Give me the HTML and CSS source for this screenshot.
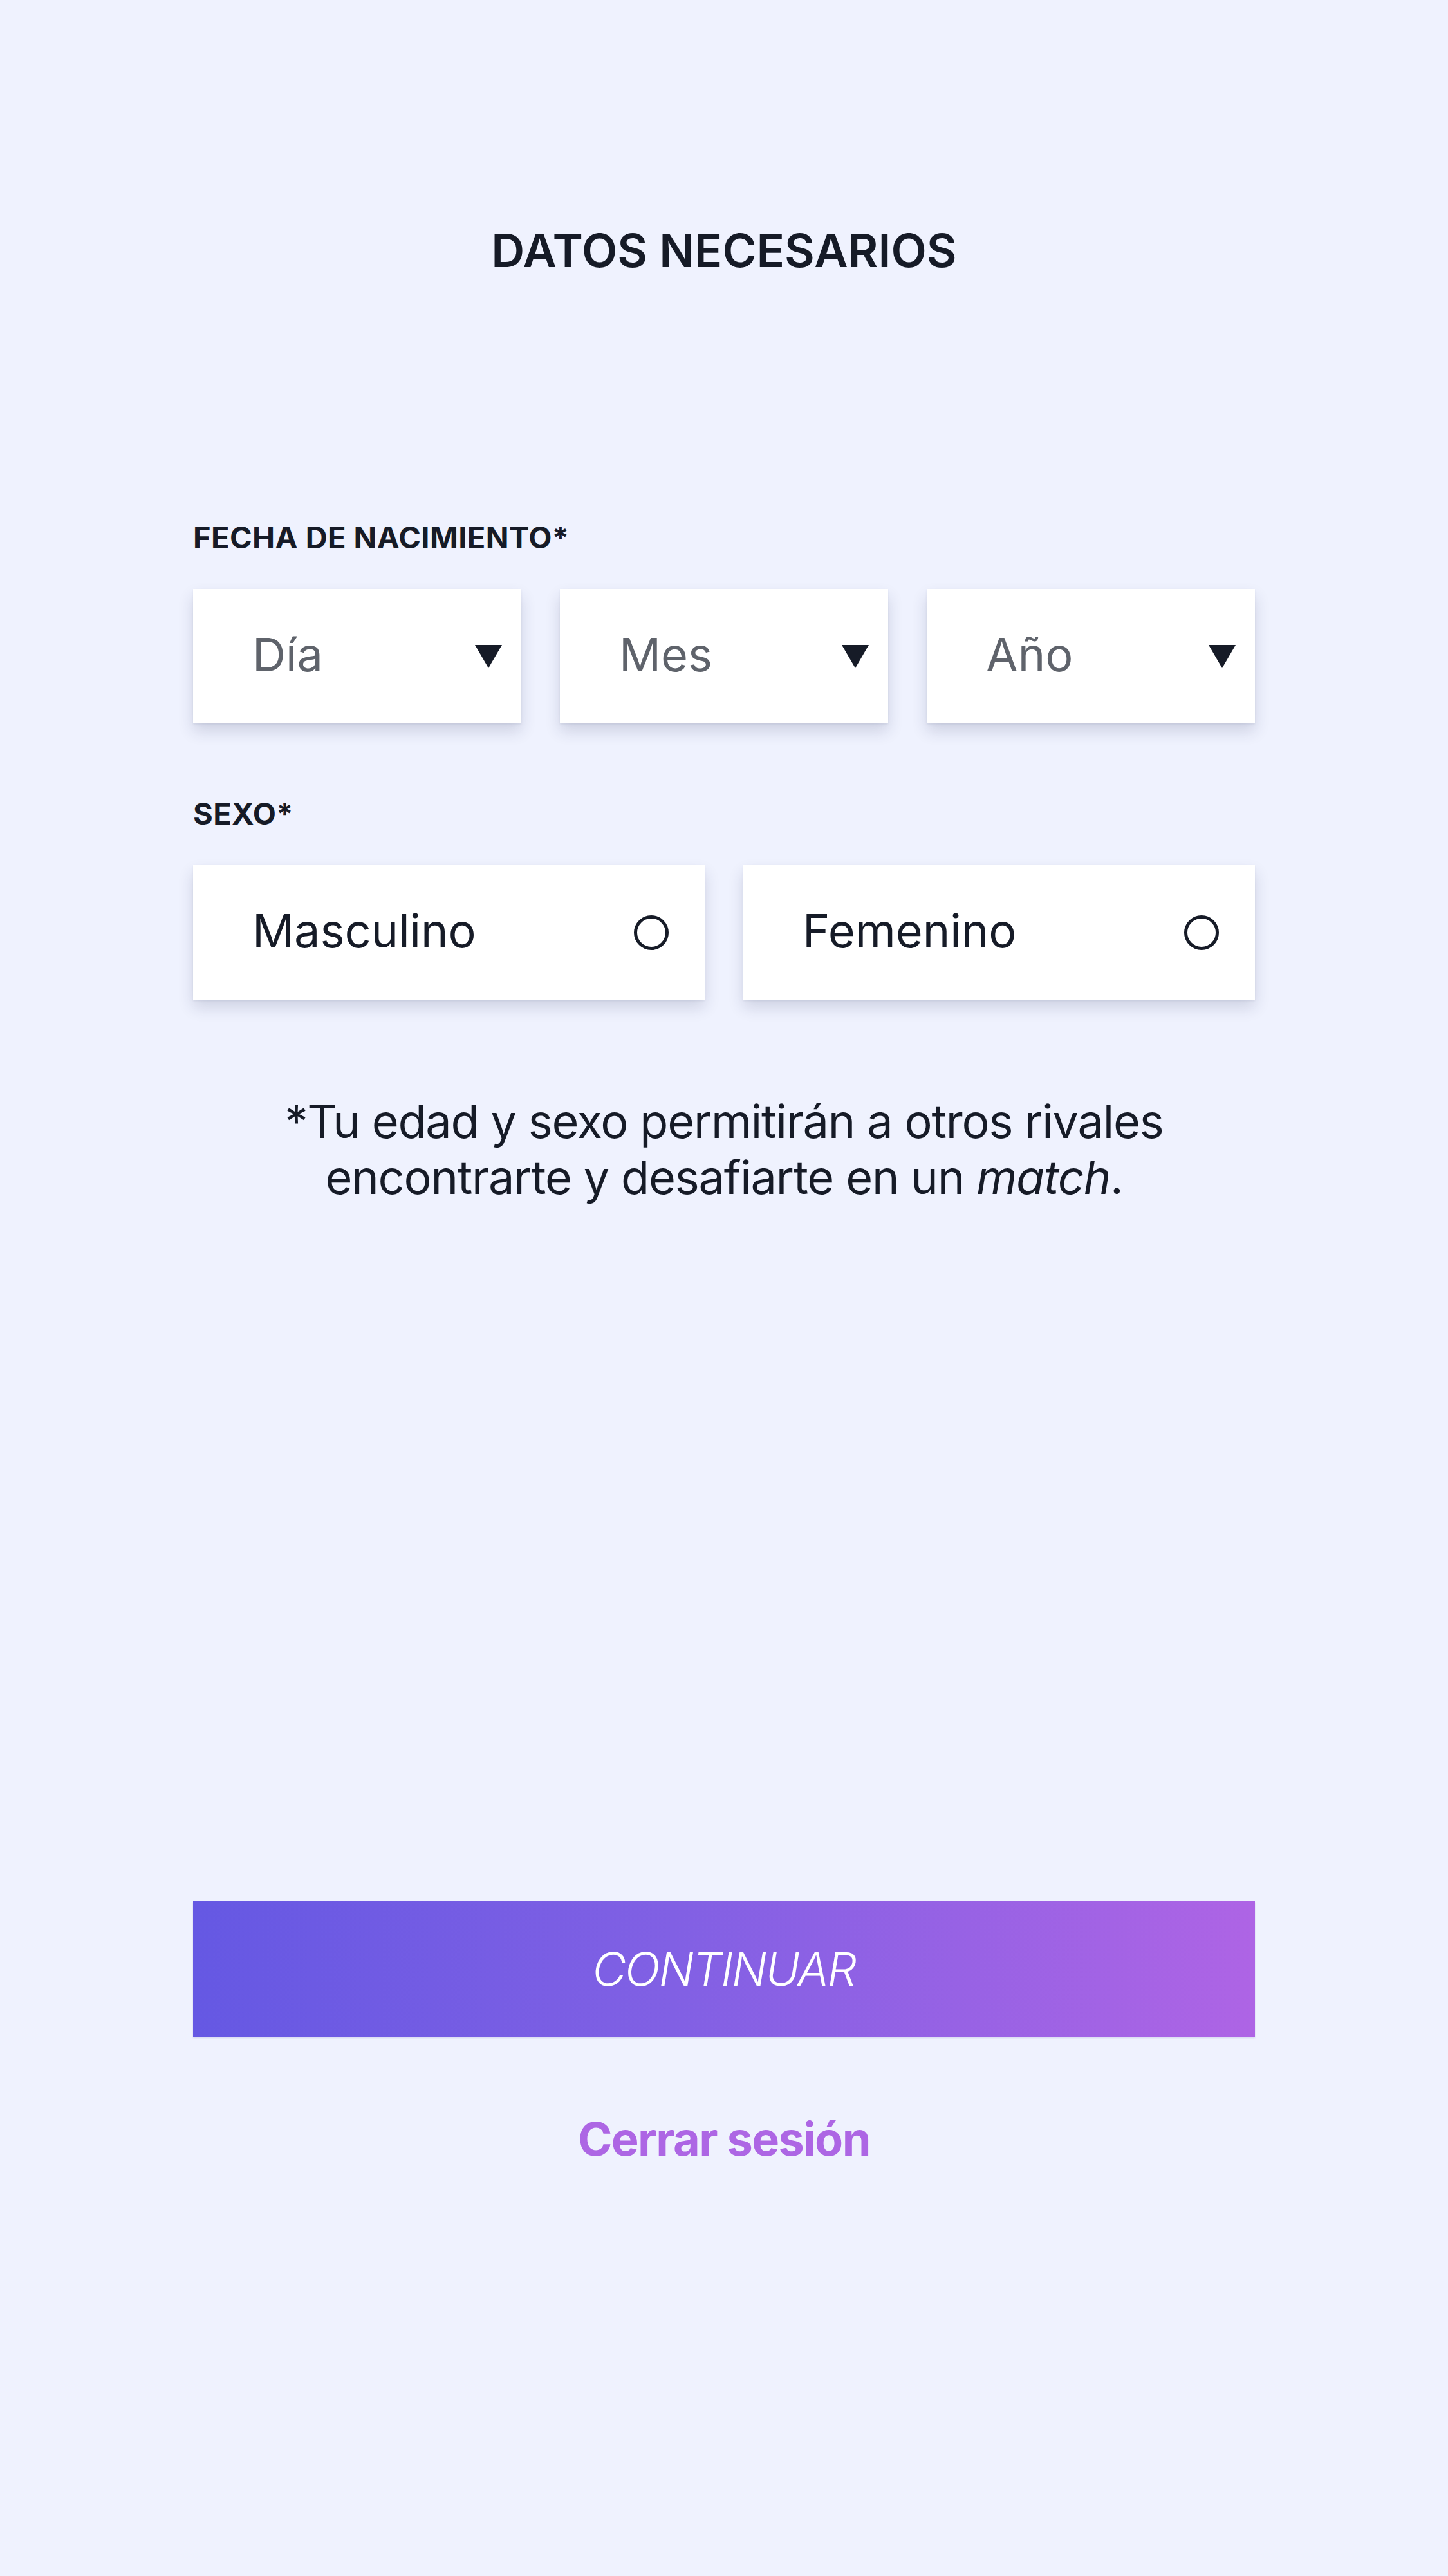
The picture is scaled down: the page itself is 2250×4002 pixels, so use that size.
FILE: index.html
```html
<!DOCTYPE html>
<html lang="es">
<head>
<meta charset="utf-8">
<title>Datos necesarios</title>
<link rel="stylesheet" href="styles.css">
</head>
<body>
<main class="page">
  <h1 class="title">DATOS NECESARIOS</h1>

  <section class="field field-date">
    <div class="label">FECHA DE NACIMIENTO*</div>
    <div class="selects">
      <div class="select"><span class="placeholder">Día</span><svg class="arrow" viewBox="0 0 42 36"><polygon points="0,0 42,0 21,36"/></svg></div>
      <div class="select"><span class="placeholder">Mes</span><svg class="arrow" viewBox="0 0 42 36"><polygon points="0,0 42,0 21,36"/></svg></div>
      <div class="select"><span class="placeholder">Año</span><svg class="arrow" viewBox="0 0 42 36"><polygon points="0,0 42,0 21,36"/></svg></div>
    </div>
  </section>

  <section class="field field-sex">
    <div class="label">SEXO*</div>
    <div class="radios">
      <div class="radio"><span class="option">Masculino</span><span class="circle"></span></div>
      <div class="radio"><span class="option">Femenino</span><span class="circle"></span></div>
    </div>
  </section>

  <p class="note">*Tu edad y sexo permitirán a otros rivales<br>encontrarte y desafiarte en un <em>match</em>.</p>

  <div class="actions">
    <button class="continue">CONTINUAR</button>
    <a class="logout">Cerrar sesión</a>
  </div>
</main>
</body>
</html>
```

FILE: styles.css
```css
html, body {
  margin: 0;
  padding: 0;
}

body {
  background: #eff2fe;
  color: #161b27;
  font-family: Inter, "Noto Sans", "Liberation Sans", sans-serif;
  min-height: 4002px;
}

.page {
  width: 1650px;
  margin: 0 auto;
  padding-top: 353px;
  display: flex;
  flex-direction: column;
}

.title {
  margin: 0 0 387px;
  font-size: 72px;
  line-height: 72px;
  font-weight: 600;
  letter-spacing: 0;
  text-align: center;
  color: #161b27;
}

.label {
  font-size: 47px;
  line-height: 46px;
  font-weight: 700;
  letter-spacing: 0.4px;
  margin-bottom: 57px;
}

.field-sex {
  margin-top: 117px;
}

.selects {
  display: grid;
  grid-template-columns: repeat(3, 1fr);
  gap: 60px;
}

.radios {
  display: grid;
  grid-template-columns: repeat(2, 1fr);
  gap: 60px;
}

.select, .radio {
  height: 209px;
  background: #ffffff;
  box-shadow: 0 12px 22px rgba(40, 45, 90, 0.16), 0 2px 3px rgba(40, 45, 90, 0.08);
  display: flex;
  align-items: center;
  justify-content: space-between;
  padding-left: 92px;
  font-size: 72px;
  line-height: 72px;
}

.select {
  padding-right: 30px;
}

.radio {
  padding-right: 56px;
}

.placeholder {
  color: #5f636b;
  padding-bottom: 6px;
}

.option {
  color: #161b27;
  padding-bottom: 6px;
}

.arrow {
  width: 42px;
  height: 36px;
  fill: #161b27;
}

.circle {
  width: 44px;
  height: 44px;
  border: 5px solid #161b27;
  border-radius: 50%;
}

.note {
  margin: 145px 0 0;
  font-size: 72px;
  line-height: 87px;
  letter-spacing: -1.2px;
  text-align: center;
  color: #161b27;
}

.note em {
  font-style: italic;
}

.actions {
  margin-top: 1082px;
  display: flex;
  flex-direction: column;
  align-items: center;
}

.continue {
  width: 100%;
  height: 210px;
  border: 0;
  padding: 0;
  background: linear-gradient(90deg, #6558e3 0%, #8160e4 45%, #ae64e5 100%);
  box-shadow: 0 2px 2px rgba(60, 50, 140, 0.15);
  color: #ffffff;
  font-family: Inter, "Noto Sans", "Liberation Sans", sans-serif;
  font-size: 72px;
  line-height: 72px;
  font-style: italic;
  font-weight: 300;
  letter-spacing: -2px;
}

.logout {
  margin-top: 123px;
  font-size: 72px;
  line-height: 72px;
  font-weight: 700;
  letter-spacing: -1.6px;
  color: #ad66e4;
}
```
